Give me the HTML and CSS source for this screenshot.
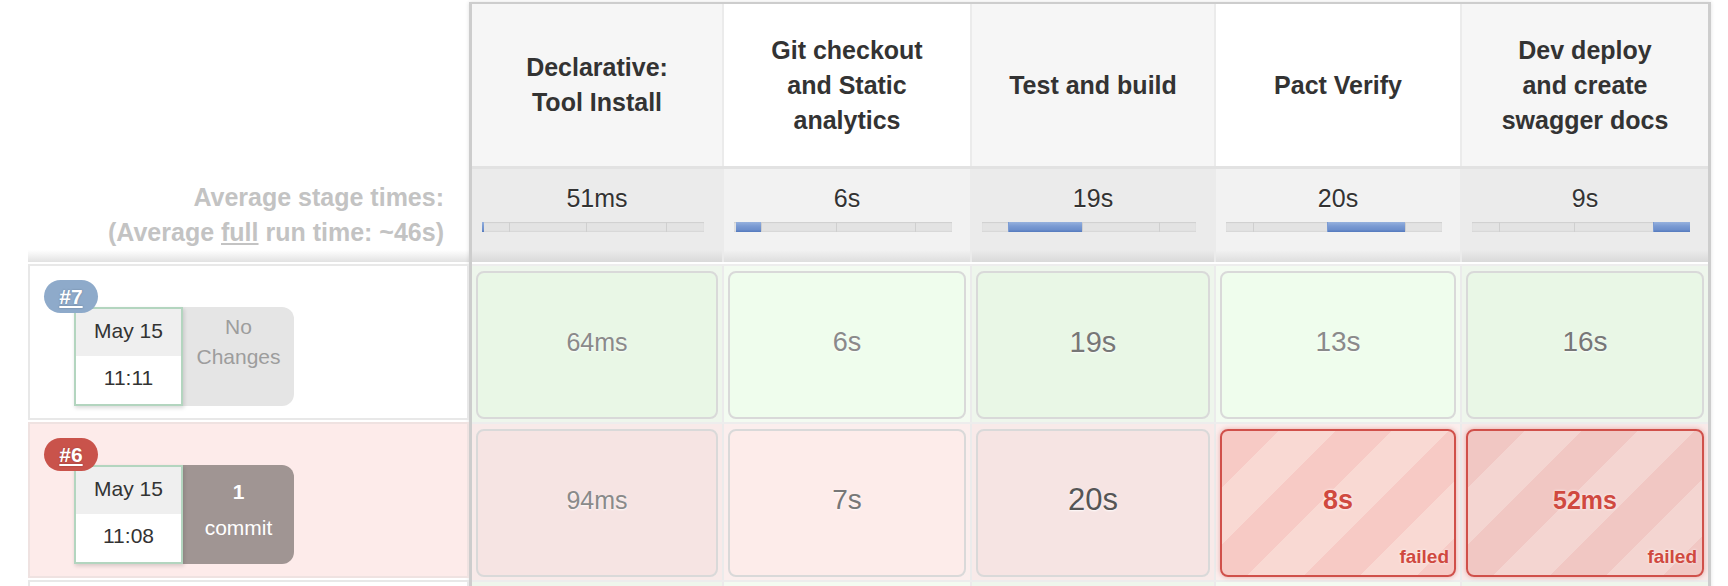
FILE: index.html
```html
<!DOCTYPE html>
<html lang="en">
<head>
<meta charset="utf-8">
<title>Stage View</title>
<link rel="stylesheet" href="styles.css">
</head>
<body>
<div class="stage-view">
  <div class="left">
    <div class="left-head"></div>
    <div class="avg-label">Average stage times:<br>(Average <u>full</u> run time: ~46s)</div>
    <div class="build">
      <a class="badge badge-ok">#7</a>
      <div class="date"><div class="day">May 15</div><div class="time">11:11</div></div>
      <div class="changes none">No<br>Changes</div>
    </div>
    <div class="build build-bad">
      <a class="badge badge-fail">#6</a>
      <div class="date"><div class="day">May 15</div><div class="time">11:08</div></div>
      <div class="changes commits"><b>1</b><br>commit</div>
    </div>
    <div class="build"></div>
  </div>

  <div class="grid">
    <div class="row head">
      <div class="cell c1 odd">Declarative:<br>Tool Install</div>
      <div class="cell c2 even">Git checkout<br>and Static<br>analytics</div>
      <div class="cell c3 odd">Test and build</div>
      <div class="cell c4 even">Pact Verify</div>
      <div class="cell c5 odd">Dev deploy<br>and create<br>swagger docs</div>
    </div>

    <div class="row avg">
      <div class="cell c1 odd"><div class="avg-time">51ms</div>
        <div class="bar"><span class="seg s1 on"></span><span class="seg s2"></span><span class="seg s3"></span><span class="seg s4"></span><span class="seg s5"></span></div></div>
      <div class="cell c2 even"><div class="avg-time">6s</div>
        <div class="bar"><span class="seg s1"></span><span class="seg s2 on"></span><span class="seg s3"></span><span class="seg s4"></span><span class="seg s5"></span></div></div>
      <div class="cell c3 odd"><div class="avg-time">19s</div>
        <div class="bar"><span class="seg s1"></span><span class="seg s2"></span><span class="seg s3 on"></span><span class="seg s4"></span><span class="seg s5"></span></div></div>
      <div class="cell c4 even"><div class="avg-time">20s</div>
        <div class="bar"><span class="seg s1"></span><span class="seg s2"></span><span class="seg s3"></span><span class="seg s4 on"></span><span class="seg s5"></span></div></div>
      <div class="cell c5 odd"><div class="avg-time">9s</div>
        <div class="bar"><span class="seg s1"></span><span class="seg s2"></span><span class="seg s3"></span><span class="seg s4"></span><span class="seg s5 on"></span></div></div>
    </div>

    <div class="row brow ok">
      <div class="cell c1 odd"><div class="box"><span class="dur f25 light">64ms</span></div></div>
      <div class="cell c2 even"><div class="box"><span class="dur f27 light">6s</span></div></div>
      <div class="cell c3 odd"><div class="box"><span class="dur f29 mid">19s</span></div></div>
      <div class="cell c4 even"><div class="box"><span class="dur f28 light">13s</span></div></div>
      <div class="cell c5 odd"><div class="box"><span class="dur f28 mid">16s</span></div></div>
    </div>

    <div class="row brow bad">
      <div class="cell c1 odd"><div class="box"><span class="dur f25 light">94ms</span></div></div>
      <div class="cell c2 even"><div class="box"><span class="dur f28 mid">7s</span></div></div>
      <div class="cell c3 odd"><div class="box"><span class="dur f31 dark">20s</span></div></div>
      <div class="cell c4 even"><div class="box fail"><span class="dur f27">8s</span><span class="failed-tag">failed</span></div></div>
      <div class="cell c5 odd"><div class="box fail"><span class="dur f25">52ms</span><span class="failed-tag">failed</span></div></div>
    </div>

    <div class="row brow ok">
      <div class="cell c1 odd"><div class="box"></div></div>
      <div class="cell c2 even"><div class="box"></div></div>
      <div class="cell c3 odd"><div class="box"></div></div>
      <div class="cell c4 even"><div class="box"></div></div>
      <div class="cell c5 odd"><div class="box"></div></div>
    </div>
  </div>
</div>
</body>
</html>
```
FILE: styles.css
```css
html, body {
  margin: 0;
  padding: 0;
  height: 586px;
  overflow: hidden;
  background: #ffffff;
  font-family: "Liberation Sans", Arial, Helvetica, sans-serif;
}

.stage-view {
  display: flex;
  align-items: flex-start;
  padding-top: 2px;
}

/* ---------- left column ---------- */
.left {
  flex: none;
  width: 441px;
  margin-left: 28px;
}

.left-head {
  height: 167px;
}

.avg-label {
  height: 93px;
  box-sizing: border-box;
  padding: 11px 25px 0 0;
  text-align: right;
  font-weight: bold;
  font-size: 25px;
  line-height: 35px;
  color: #c3c3c3;
  background: linear-gradient(to bottom, #ffffff calc(100% - 12px), #e2e2e2);
}

.build {
  position: relative;
  height: 156px;
  box-sizing: border-box;
  margin-top: 2px;
  border: 2px solid #e8e8e8;
  background: #ffffff;
  display: flex;
  align-items: flex-start;
  padding: 41px 0 0 44px;
}

.build.build-bad {
  background: #fdebea;
  border-color: #efe2e1;
}

.badge {
  position: absolute;
  top: 14px;
  left: 14px;
  z-index: 2;
  width: 54px;
  height: 33px;
  border-radius: 17px;
  color: #ffffff;
  font-weight: bold;
  font-size: 21px;
  line-height: 33px;
  text-align: center;
  text-decoration: underline;
  text-shadow: 0 0 2px rgba(0, 0, 0, 0.25);
}

.badge-ok { background: #8eaaca; }
.badge-fail { background: #c9534b; }

.date {
  position: relative;
  z-index: 1;
  flex: none;
  width: 109px;
  height: 99px;
  box-sizing: border-box;
  border: 2px solid #b3d5bf;
  background: #ffffff;
  box-shadow: 1px 2px 4px rgba(0, 0, 0, 0.15);
  text-align: center;
  font-size: 21px;
  color: #333333;
}

.day {
  height: 47px;
  line-height: 44px;
  background: #efefef;
}

.time {
  height: 48px;
  line-height: 44px;
}

.changes {
  flex: none;
  width: 111px;
  height: 99px;
  box-sizing: border-box;
  border-radius: 0 12px 12px 0;
  text-align: center;
  font-size: 21px;
}

.changes.none {
  background: #e5e5e5;
  color: #9d9d9d;
  padding-top: 5px;
  line-height: 30px;
}

.changes.commits {
  background: #a09593;
  color: #ffffff;
  padding-top: 9px;
  line-height: 36px;
}

/* ---------- stage grid ---------- */
.grid {
  flex: none;
  border: solid #cdcdcd;
  border-width: 2px 3px 0 3px;
  background: #ffffff;
  box-shadow: 0 0 4px rgba(0, 0, 0, 0.12);
}

.row {
  display: flex;
}

.cell {
  flex: none;
  box-sizing: border-box;
  border-right: 2px solid #ebebeb;
}

.cell.c5 { border-right: none; }

.c1 { width: 252px; }
.c2 { width: 248px; }
.c3 { width: 244px; }
.c4 { width: 246px; }
.c5 { width: 246px; }

/* header */
.head {
  border-bottom: 3px solid #e2e2e2;
}

.head .cell {
  height: 162px;
  display: flex;
  align-items: center;
  justify-content: center;
  text-align: center;
  font-weight: bold;
  font-size: 25px;
  line-height: 35px;
  color: #333333;
}

.head .odd { background: #f6f6f6; }
.head .even { background: #ffffff; }

/* averages */
.avg {
  margin-bottom: 2px;
}

.avg .cell {
  height: 93px;
  padding-top: 14px;
  text-align: center;
}

.avg .odd { background: linear-gradient(to bottom, #ebebeb calc(100% - 12px), #d9d9d9); }
.avg .even { background: linear-gradient(to bottom, #f2f2f2 calc(100% - 12px), #dedede); }

.avg-time {
  font-size: 25px;
  line-height: 30px;
  color: #333333;
  text-shadow: 0 1px 1px rgba(255, 255, 255, 0.9);
}

.bar {
  display: flex;
  height: 10px;
  margin: 9px 18px 0 10px;
  background: #e3e3e3;
  box-shadow: inset 0 1px 1px #cfcfcf, inset 0 -1px 1px #d6d6d6;
}

.seg {
  display: block;
  height: 10px;
  min-width: 0;
}

.s1 { flex: 0 0 2px; }
.s2 { flex: 26 1 0; }
.s3 { flex: 77 1 0; border-left: 1px solid #cfcfcf; }
.s4 { flex: 81 1 0; border-left: 1px solid #cfcfcf; }
.s5 { flex: 38 1 0; border-left: 1px solid #cfcfcf; }

.seg.on {
  background: linear-gradient(to bottom, #96b1de 0, #7b9bd3 40%, #6e90cc 75%, #5479bd 100%);
  border-left-color: #7b9bd3;
}

/* build rows */
.brow {
  border-top: 2px solid #ededed;
}

.brow .cell {
  height: 156px;
  padding: 5px 4px 3px;
}

.ok .odd { background: #eef6ec; }
.ok .even { background: #f3fbf1; }
.bad .odd { background: #f8eae9; }
.bad .even { background: #fbeeed; }

.box {
  position: relative;
  height: 148px;
  box-sizing: border-box;
  border: 2px solid #d9d9d9;
  border-radius: 8px;
  padding-bottom: 6px;
  display: flex;
  align-items: center;
  justify-content: center;
}

.ok .odd .box { background: #e9f7e6; }
.ok .even .box { background: #effded; }
.bad .odd .box { background: #f6e4e3; }
.bad .even .box { background: #fdecea; }

.dur {
  text-shadow: 0 1px 2px rgba(255, 255, 255, 0.9);
}

.f25 { font-size: 25px; }
.f27 { font-size: 27px; }
.f28 { font-size: 28px; }
.f29 { font-size: 29px; }
.f31 { font-size: 31px; }

.light { color: #8a8a8a; }
.mid { color: #777777; }
.dark { color: #555555; }

.bad .box.fail {
  border-color: #d0504a;
  box-shadow: 0 0 5px rgba(208, 80, 74, 0.45);
  color: #d0493f;
  font-weight: bold;
}

.bad .even .box.fail {
  background: repeating-linear-gradient(135deg, #f7cac5 0 40px, #f9d9d3 40px 80px);
}

.bad .odd .box.fail {
  background: repeating-linear-gradient(135deg, #f1c7c3 0 40px, #f4d5d1 40px 80px);
}

.fail .dur {
  text-shadow: 0 0 3px rgba(255, 255, 255, 0.9);
}

.failed-tag {
  position: absolute;
  right: 5px;
  bottom: 9px;
  font-size: 19px;
  line-height: 1;
  font-weight: bold;
  color: #d0493f;
  text-shadow: 0 0 3px rgba(255, 255, 255, 0.9);
}
```
